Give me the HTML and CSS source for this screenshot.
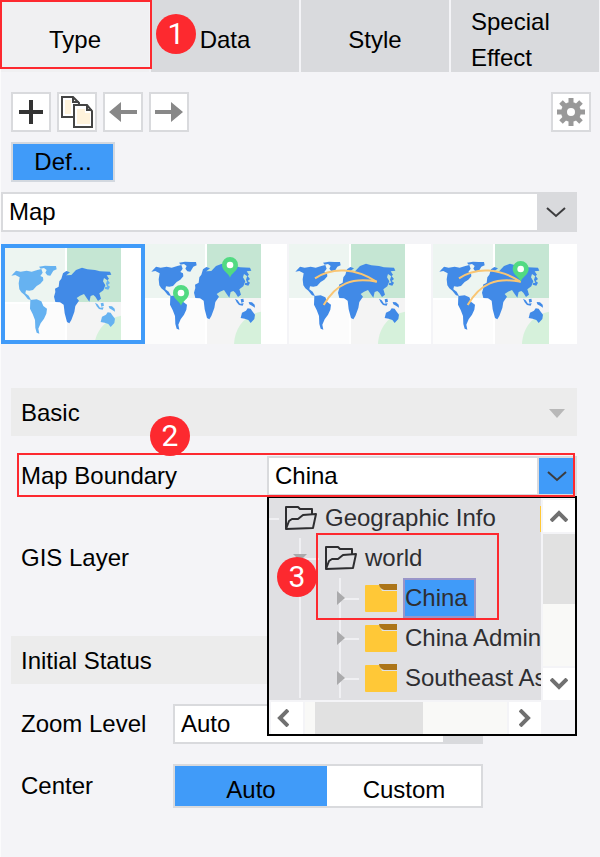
FILE: index.html
```html
<!DOCTYPE html>
<html lang="en">
<head>
<meta charset="utf-8">
<title>Map settings</title>
<link rel="stylesheet" href="styles.css">
</head>
<body>
<svg class="defs" aria-hidden="true">
  <defs>
    <g id="tiles">
      <rect x="15" y="24" width="348" height="300" fill="#fff"/>
      <rect x="15" y="24" width="180" height="162" fill="#edf5f1"/>
      <rect x="201" y="24" width="162" height="162" fill="#c5e6d3"/>
      <rect x="15" y="192" width="180" height="132" fill="#fcfcfc"/>
      <rect x="201" y="186" width="162" height="138" fill="#f4f4f4"/>
      <path d="M282 324C284 275 315 236 363 227V324Z" fill="#d6f1db"/>
    </g>
    <g id="west">
      <path d="M34 107L48 92L62 95L80 92L95 95L112 90L124 87L128 98L121 108L129 112L130 121L121 131L110 138L99 150L88 152L78 151L76 160L86 167L93 180L84 178L73 164L64 157L58 148L56 130L59 112L46 105Z"/>
      <path d="M117 80L135 77L152 78L168 78L170 88L160 92L151 107L142 106L136 98L140 90L132 84L122 86Z"/>
      <path d="M91 180L110 178L124 184L130 198L141 206L139 221L132 236L122 250L115 266L118 281L110 278L106 264L105 240L98 222L90 206Z"/>
    </g>
    <path id="east" d="M184 116L189 100L199 93L210 97L199 106L214 105L228 90L246 83L262 88L285 90L300 94L330 95L334 104L320 106L327 116L322 121L312 114L309 124L316 136L310 151L298 160L303 176L294 183L286 170L280 165L272 168L268 185L260 174L252 162L240 167L230 174L237 182L226 198L223 216L214 240L208 250L201 246L194 220L191 194L180 187L166 186L162 170L166 156L165 146L176 140L178 124Z"/>
    <g id="islands">
      <path d="M322 119L330 129L323 135L330 140L325 149L314 146L316 140L322 141L318 131Z"/>
      <path d="M285 188L293 193L300 203L311 202L308 209L297 207L290 199ZM302 190L310 188L312 197L304 200ZM326 198L336 199L344 206L345 215L337 210L328 205Z"/>
      <path d="M302 246L306 230L318 224L323 217L332 218L337 226L345 236L343 249L332 261L325 252L314 248Z"/>
    </g>
    <g id="world" fill="#418ae7"><use href="#west"/><use href="#east"/><use href="#islands"/></g>
    <g id="routes" fill="none" stroke="#f9c674" stroke-width="6">
      <path d="M93 127C145 92 215 96 277 137"/><path d="M119 207C158 140 205 124 279 137"/>
    </g>
    <g id="pin">
      <path d="M0 38C-4 24-24 18-24 0A24 24 0 0 1 24 0C24 18 4 24 0 38Z" fill="#52da82"/><circle r="10" fill="#fff"/>
    </g>
    <g id="folder-open" fill="none" stroke="#2e2e31" stroke-width="2" stroke-linejoin="round">
      <path d="M1 23V1H13L15 3H27V8"/><path d="M1 23L4 15L7 13H13L18 9L31 8L28 22Z"/>
    </g>
    <g id="folder">
      <path d="M1 1H14L17 7H32V27Q32 28 31 28H1Q0 28 0 27V2Q0 1 1 1Z" fill="#ffc837"/><path d="M14 0H32V6H19Q14 4 14 0Z" fill="#ac7519"/>
    </g>
    <path id="chevron" d="M1 2L10 10L19 2" fill="none" stroke="#3c3c3e" stroke-width="2"/>
  </defs>
</svg>

<main class="panel">
  <nav class="tabs">
    <button class="tab tab-active" type="button">Type</button>
    <button class="tab" type="button">Data</button>
    <button class="tab" type="button">Style</button>
    <button class="tab tab-long" type="button">Special Effect</button>
    <span class="frame frame-tab"></span>
    <span class="badge badge-tab">1</span>
  </nav>

  <div class="toolbar">
    <button class="tool" type="button" aria-label="Add"><svg width="36" height="36"><path d="M6 18H30M18 6V30" stroke="#333" stroke-width="4"/></svg></button>
    <button class="tool" type="button" aria-label="Copy"><svg width="36" height="36" fill="none" stroke="#444" stroke-width="2"><path d="M3 3H14L20 9V23H3Z" fill="#fff"/><path d="M6 6H12V20H6Z" fill="#fff3dc" stroke="none"/><path d="M14 3V8H20"/><path d="M15 11H28L33 17V33H15Z" fill="#fff"/><path d="M18 15H26V19H31V30H18Z" fill="#fff3dc" stroke="none"/><path d="M28 11V16H33"/></svg></button>
    <button class="tool" type="button" aria-label="Back"><svg width="36" height="36" fill="#888"><path d="M4 18L16 8V16H32V20H16V28Z"/></svg></button>
    <button class="tool" type="button" aria-label="Forward"><svg width="36" height="36" fill="#888"><path d="M32 18L20 8V16H4V20H20V28Z"/></svg></button>
    <button class="tool tool-end" type="button" aria-label="Settings"><svg width="36" height="36"><path d="M18 4V32M4 18H32M8 8L28 28M28 8L8 28" stroke="#999" stroke-width="5"/><circle cx="18" cy="18" r="7" fill="#fff" stroke="#999" stroke-width="6"/></svg></button>
  </div>
  <button class="chip" type="button">Def...</button>

  <div class="content">
    <div class="select">
      <select aria-label="Chart type"><option>Map</option></select>
      <span class="arrow"><svg width="20" height="12"><use href="#chevron"/></svg></span>
    </div>

    <div class="thumbs">
      <button class="thumb thumb-active" type="button" aria-label="Area map"><svg viewBox="15 24 348 300"><use href="#tiles"/><g fill="#66b2f1"><use href="#west"/><use href="#islands"/></g><use href="#east" fill="#418ae7"/></svg></button>
      <button class="thumb" type="button" aria-label="Point map"><svg viewBox="15 24 348 300"><use href="#tiles"/><use href="#world"/><use href="#pin" x="270" y="87"/><use href="#pin" x="123" y="171"/></svg></button>
      <button class="thumb" type="button" aria-label="Line map"><svg viewBox="15 24 348 300"><use href="#tiles"/><use href="#world"/><use href="#routes"/></svg></button>
      <button class="thumb" type="button" aria-label="Flow map"><svg viewBox="15 24 348 300"><use href="#tiles"/><use href="#world"/><use href="#routes"/><use href="#pin" x="278" y="99"/></svg></button>
    </div>

    <h2 class="section">Basic <svg width="16" height="9"><path d="M0 0H16L8 9Z" fill="#b8b8b8"/></svg></h2>

    <div class="row row-wide row-boundary">
      <label for="boundary">Map Boundary</label>
      <div class="select select-open">
        <select id="boundary"><option>China</option></select>
        <span class="arrow"><svg width="20" height="12"><use href="#chevron"/></svg></span>
        <div class="popup">
          <ul class="tree">
            <li class="node level-1"><svg width="32" height="24"><use href="#folder-open"/></svg><button type="button">Geographic Info</button></li>
            <li class="node level-2"><svg width="32" height="24"><use href="#folder-open"/></svg><button type="button">world</button></li>
            <li class="node level-3"><svg width="32" height="28"><use href="#folder"/></svg><button class="picked" type="button">China</button></li>
            <li class="node level-3"><svg width="32" height="28"><use href="#folder"/></svg><button type="button">China Admin</button></li>
            <li class="node level-3"><svg width="32" height="28"><use href="#folder"/></svg><button type="button">Southeast As</button></li>
          </ul>
          <div class="scroll scroll-y">
            <button type="button" aria-label="Scroll up"><svg width="18" height="12"><path d="M1 11L9 3L17 11" fill="none" stroke="#707070" stroke-width="4"/></svg></button>
            <span class="track"><span class="grip"></span></span>
            <button type="button" aria-label="Scroll down"><svg width="18" height="12"><path d="M1 1L9 9L17 1" fill="none" stroke="#707070" stroke-width="4"/></svg></button>
          </div>
          <div class="scroll scroll-x">
            <button class="scroll-back" type="button" aria-label="Scroll left"><svg width="12" height="18"><path d="M11 1L3 9L11 17" fill="none" stroke="#707070" stroke-width="4"/></svg></button>
            <span class="track"><span class="grip"></span></span>
            <button type="button" aria-label="Scroll right"><svg width="12" height="18"><path d="M1 1L9 9L1 17" fill="none" stroke="#707070" stroke-width="4"/></svg></button>
          </div>
          <span class="frame frame-tree"></span>
          <span class="badge badge-tree">3</span>
        </div>
      </div>
      <span class="frame frame-row"></span>
      <span class="badge badge-row">2</span>
    </div>

    <div class="row row-gis"><span>GIS Layer</span></div>

    <h2 class="section">Initial Status</h2>

    <div class="row">
      <label for="zoom">Zoom Level</label>
      <div class="select">
        <select id="zoom"><option>Auto</option></select>
        <span class="arrow"><svg width="20" height="12"><use href="#chevron"/></svg></span>
      </div>
    </div>
    <div class="row">
      <span>Center</span>
      <div class="segments">
        <button class="segment segment-on" type="button">Auto</button>
        <button class="segment" type="button">Custom</button>
      </div>
    </div>
  </div>
</main>
</body>
</html>
```
FILE: styles.css
```css
* {
  box-sizing: border-box;
}

body {
  margin: 0;
  background: #f4f4f7;
  color: #000;
  font: 24px/36px "Liberation Sans", Arial, sans-serif;
}

button,
select {
  margin: 0;
  padding: 0;
  border: 0;
  border-radius: 0;
  background: none;
  color: inherit;
  font: inherit;
}

svg {
  display: block;
  flex: none;
}

.defs {
  position: absolute;
  width: 0;
  height: 0;
}

.panel {
  min-height: 100vh;
  border-left: 1px solid #fbfbfc;
}

/* Tabs */

.tabs {
  position: relative;
  display: grid;
  grid-template-columns: repeat(4, 1fr);
  grid-template-rows: 72px;
  gap: 2px;
  padding-right: 1px;
}

.tab {
  display: flex;
  align-items: center;
  justify-content: center;
  height: 72px;
  padding-top: 8px;
  background: #d9dadd;
}

.tab-active {
  background: #f0f0f2;
}

.tab-long {
  align-items: flex-start;
  padding: 4px 20px 0;
  text-align: left;
}

/* Toolbar */

.toolbar {
  display: flex;
  gap: 6px;
  padding: 20px 9px 0 10px;
}

.tool {
  width: 40px;
  height: 40px;
  border: 2px solid #d9dadd;
  background: #fff;
}

.tool-end {
  margin-left: auto;
}

.chip {
  display: block;
  width: 104px;
  height: 40px;
  margin: 10px 0 10px 10px;
  border: 2px solid #d3d8df;
  background: #409bf9;
}

.content {
  margin-right: 23px;
}

/* Drop-downs */

.select {
  position: relative;
  display: flex;
  height: 40px;
  border: 2px solid #d9dadd;
  background: #fff;
}

.select select {
  flex: 1;
  min-width: 0;
  padding: 0 40px 0 6px;
  appearance: none;
}

.arrow {
  position: absolute;
  inset: 0 0 0 auto;
  display: flex;
  align-items: center;
  justify-content: center;
  width: 38px;
  background: #d9dadd;
  pointer-events: none;
}

.select-open .arrow {
  border-left: 2px solid #d9dadd;
  background: #409bf9;
}

/* Map styles */

.thumbs {
  display: grid;
  grid-template-columns: repeat(4, 1fr);
  grid-template-rows: 100px;
  margin-top: 12px;
}

.thumb {
  display: flex;
  border-right: 2px solid #f4f4f7;
  background: #fff;
  overflow: hidden;
}

.thumb:last-child {
  border-right: 0;
}

.thumb-active {
  border: 4px solid #409bf9;
}

.thumb svg {
  width: 116px;
  height: 100px;
}

/* Form */

.section {
  display: flex;
  align-items: center;
  justify-content: space-between;
  height: 48px;
  margin: 44px 0 20px 10px;
  padding: 2px 12px 0 10px;
  background: #ececec;
  font: inherit;
}

.row {
  position: relative;
  display: grid;
  grid-template-columns: 152px 310px;
  align-items: center;
  min-height: 40px;
  margin: 0 0 20px 10px;
  padding-left: 10px;
}

.row-wide {
  grid-template-columns: 246px 1fr;
}

.row-boundary {
  margin-bottom: 42px;
}

.row-gis {
  margin-bottom: 58px;
}

.segments {
  display: grid;
  grid-template-columns: 152px 1fr;
  grid-template-rows: 40px;
  border: 2px solid #d9dadd;
  background: #fff;
}

.segment {
  padding-top: 8px;
  line-height: 32px;
}

.segment-on {
  background: #409bf9;
}

/* Boundary popup */

.popup {
  position: absolute;
  top: 38px;
  left: -2px;
  right: -2px;
  z-index: 1;
  display: grid;
  grid-template-columns: 1fr 34px;
  grid-template-rows: 202px 34px;
  border: 2px solid #000;
  background: #f4f4f7;
}

.tree {
  min-width: 0;
  margin: 0;
  padding: 0;
  background: #e0e0e3;
  color: #2e2e31;
  list-style: none;
  overflow: hidden;
}

.node {
  position: relative;
  display: flex;
  align-items: center;
  gap: 6px;
  height: 40px;
  background-repeat: no-repeat;
  white-space: nowrap;
}

.node button {
  height: 40px;
  padding: 0 2px;
}

.node .picked {
  padding-right: 8px;
  outline: 2px solid #9995c9;
  outline-offset: -2px;
  background: #409bf9;
}

/* Indents and guide lines */

.level-1 {
  padding-left: 16px;
  background-image: linear-gradient(#f0f0f3, #f0f0f3), linear-gradient(#ffc837, #ffc837);
  background-position: 0 20px, 100% 8px;
  background-size: 10px 2px, 1px 26px;
}

.level-2 {
  padding-left: 56px;
  background-image: linear-gradient(#f0f0f3, #f0f0f3), linear-gradient(#f0f0f3, #f0f0f3);
  background-position: 30px 0, 32px 20px;
  background-size: 2px 40px, 18px 2px;
}

.level-3 {
  padding-left: 96px;
  background-image: linear-gradient(#f0f0f3, #f0f0f3), linear-gradient(#f0f0f3, #f0f0f3), linear-gradient(#f0f0f3, #f0f0f3);
  background-position: 30px 0, 70px 0, 72px 20px;
  background-size: 2px 40px, 2px 40px, 18px 2px;
}

.level-2::before,
.level-3::before {
  content: "";
  position: absolute;
  background: #aaaaac;
}

.level-2::before {
  left: 24px;
  top: 16px;
  width: 14px;
  height: 7px;
  clip-path: polygon(0 0, 100% 0, 50% 100%);
}

.level-3::before {
  left: 68px;
  top: 13px;
  width: 8px;
  height: 14px;
  clip-path: polygon(0 0, 100% 50%, 0 100%);
}

/* Scrollbars */

.scroll {
  display: flex;
  gap: 2px;
  padding: 2px 0 0 2px;
}

.scroll button {
  display: flex;
  flex: none;
  align-items: center;
  justify-content: center;
  width: 32px;
  height: 32px;
  background: #fff;
}

.scroll .scroll-back {
  padding-right: 8px;
}

.track {
  display: flex;
  flex: 1;
  background: #f9f9f7;
}

.grip {
  background: #e1e1e1;
}

.scroll-y,
.scroll-y .track {
  flex-direction: column;
}

.scroll-y .grip {
  height: 70px;
}

.scroll-x .grip {
  width: 108px;
  margin-left: 10px;
}

/* Callouts */

.frame {
  position: absolute;
  z-index: 2;
  border: 2px solid #fd292f;
  pointer-events: none;
}

.badge {
  position: absolute;
  z-index: 3;
  width: 40px;
  height: 40px;
  border-radius: 50%;
  background: #fd292f;
  color: #fff;
  font: 30px/40px Roboto, sans-serif;
  text-align: center;
}

.frame-tab {
  top: 0;
  left: -1px;
  width: 152px;
  height: 69px;
}

.badge-tab {
  top: 14px;
  left: 155px;
}

.frame-row {
  inset: -3px 2px -1px 6px;
}

.badge-row {
  top: -40px;
  left: 139px;
}

.frame-tree {
  top: 35px;
  left: 47px;
  width: 183px;
  height: 87px;
}

.badge-tree {
  top: 59px;
  left: 8px;
}
```
